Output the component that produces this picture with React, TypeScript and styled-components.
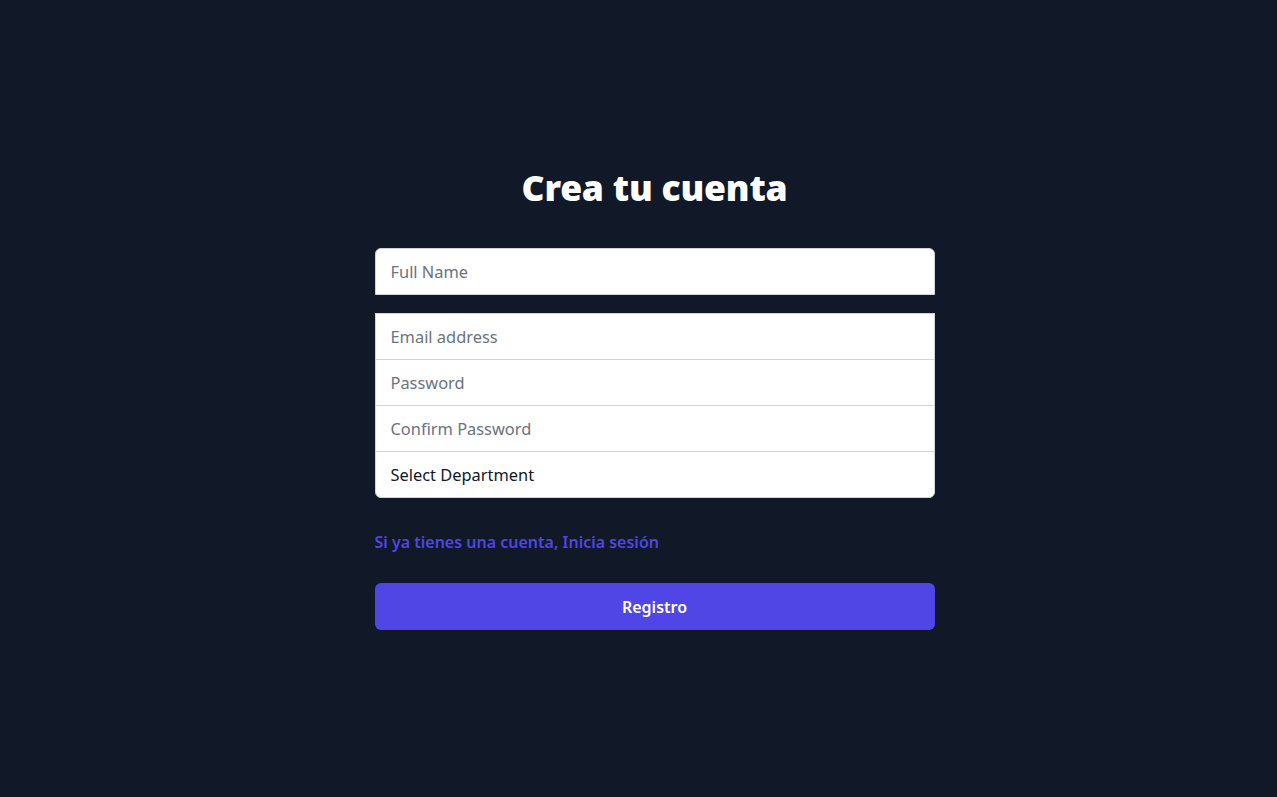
import React from "react";
import styled, { createGlobalStyle } from "styled-components";

const Global = createGlobalStyle`
  html, body { margin: 0; padding: 0; background: #111827; }
  body { font-family: "Noto Sans", "Open Sans", sans-serif; }
  * { box-sizing: border-box; }
`;

const Page = styled.main`
  min-height: 797px;
  display: flex;
  justify-content: center;
  padding-top: 166px;
  padding-left: 32px;
`;

const Column = styled.div`
  width: 560px;
  display: flex;
  flex-direction: column;
`;

const Title = styled.h2`
  margin: 0;
  text-align: center;
  color: #ffffff;
  font-size: 35.5px;
  line-height: 42px;
  font-weight: 900;
  letter-spacing: -0.2px;
`;

const Form = styled.form`
  margin-top: 40px;
  display: flex;
  flex-direction: column;
`;

const Group = styled.div<{ $gap?: number }>`
  display: flex;
  flex-direction: column;
  margin-top: ${(p) => p.$gap ?? 0}px;
`;

const Field = styled.input<{ $pos: "single" | "top" | "mid" }>`
  display: block;
  width: 100%;
  height: 47px;
  margin: 0;
  padding: 0 15px;
  border: 1px solid #d1d5db;
  margin-top: ${(p) => (p.$pos === "mid" ? "-1px" : "0")};
  border-radius: ${(p) => (p.$pos === "single" ? "6px 6px 0 0" : "0")};
  background: #ffffff;
  color: #111827;
  font-family: inherit;
  font-size: 16.4px;
  outline: none;
  &::placeholder { color: #6b7280; }
`;

const SelectBox = styled.div`
  height: 47px;
  margin-top: -1px;
  padding: 0 15px;
  display: flex;
  align-items: center;
  border: 1px solid #d1d5db;
  border-radius: 0 0 6px 6px;
  background: #ffffff;
  color: #111827;
  font-size: 16.4px;
`;

const LinkText = styled.a`
  margin-top: 32px;
  display: block;
  color: #4f46e5;
  font-size: 16px;
  line-height: 24px;
  font-weight: 600;
  text-decoration: none;
`;

const Button = styled.button`
  margin-top: 29px;
  width: 100%;
  height: 47px;
  border: none;
  border-radius: 6px;
  background: #4f46e5;
  color: #ffffff;
  font-family: inherit;
  font-size: 16px;
  font-weight: 600;
`;

export default function App() {
  return (
    <>
      <Global />
      <Page>
        <Column>
          <Title>Crea tu cuenta</Title>
          <Form onSubmit={(e) => e.preventDefault()}>
            <Field $pos="single" placeholder="Full Name" />
            <Group $gap={18}>
              <Field $pos="top" placeholder="Email address" />
              <Field $pos="mid" placeholder="Password" type="password" />
              <Field $pos="mid" placeholder="Confirm Password" type="password" />
              <SelectBox>Select Department</SelectBox>
            </Group>
            <LinkText href="#">Si ya tienes una cuenta, Inicia sesión</LinkText>
            <Button type="submit">Registro</Button>
          </Form>
        </Column>
      </Page>
    </>
  );
}
